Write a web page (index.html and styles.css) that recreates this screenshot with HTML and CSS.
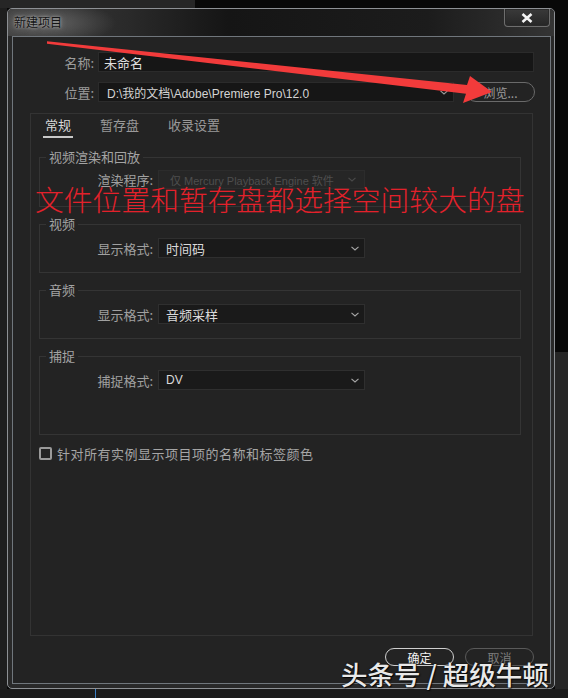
FILE: index.html
```html
<!DOCTYPE html>
<html lang="zh-CN">
<head>
<meta charset="utf-8">
<title>新建项目</title>
<link rel="stylesheet" href="styles.css">
</head>
<body>
<div class="screen">
  <div class="dialog">
    <div class="titlebar">
      <span class="title">新建项目</span>
      <div class="close">
        <svg width="12" height="10" viewBox="0 0 12 10"><path d="M1.5 1 L10.5 9 M10.5 1 L1.5 9" stroke="#f4f4f4" stroke-width="2.6" fill="none"/></svg>
      </div>
    </div>
    <div class="panel">
      <div class="field-row">
        <span class="field-label">名称:</span>
        <div class="text-input name-input">未命名</div>
      </div>
      <div class="field-row loc-row">
        <span class="field-label">位置:</span>
        <div class="text-input loc-input">
          <span>D:\我的文档\Adobe\Premiere Pro\12.0</span>
          <svg class="chev" width="8" height="5" viewBox="0 0 8 5"><path d="M0.5 0.8 L4 4 L7.5 0.8" stroke="#9a9a9a" stroke-width="1.1" fill="none"/></svg>
        </div>
        <div class="pill browse">浏览...</div>
      </div>

      <div class="tab-panel">
        <div class="tabs">
          <span class="tab active">常规</span>
          <span class="tab">暂存盘</span>
          <span class="tab">收录设置</span>
        </div>

        <fieldset class="group group-render">
          <legend>视频渲染和回放</legend>
          <div class="prop-row">
            <span class="prop-label">渲染程序:</span>
            <div class="select disabled">
              <span>仅 Mercury Playback Engine 软件</span>
              <svg class="chev" width="8" height="5" viewBox="0 0 8 5"><path d="M0.5 0.8 L4 4 L7.5 0.8" stroke="#4a4a4a" stroke-width="1.1" fill="none"/></svg>
            </div>
          </div>
        </fieldset>

        <fieldset class="group">
          <legend>视频</legend>
          <div class="prop-row">
            <span class="prop-label">显示格式:</span>
            <div class="select">
              <span>时间码</span>
              <svg class="chev" width="8" height="5" viewBox="0 0 8 5"><path d="M0.5 0.8 L4 4 L7.5 0.8" stroke="#a8a8a8" stroke-width="1.1" fill="none"/></svg>
            </div>
          </div>
        </fieldset>

        <fieldset class="group">
          <legend>音频</legend>
          <div class="prop-row">
            <span class="prop-label">显示格式:</span>
            <div class="select">
              <span>音频采样</span>
              <svg class="chev" width="8" height="5" viewBox="0 0 8 5"><path d="M0.5 0.8 L4 4 L7.5 0.8" stroke="#a8a8a8" stroke-width="1.1" fill="none"/></svg>
            </div>
          </div>
        </fieldset>

        <fieldset class="group group-capture">
          <legend>捕捉</legend>
          <div class="prop-row">
            <span class="prop-label">捕捉格式:</span>
            <div class="select">
              <span class="latin">DV</span>
              <svg class="chev" width="8" height="5" viewBox="0 0 8 5"><path d="M0.5 0.8 L4 4 L7.5 0.8" stroke="#a8a8a8" stroke-width="1.1" fill="none"/></svg>
            </div>
          </div>
        </fieldset>

        <label class="check-row">
          <span class="checkbox"></span>
          <span class="check-text">针对所有实例显示项目项的名称和标签颜色</span>
        </label>
      </div>

      <div class="button-row">
        <div class="pill ok">确定</div>
        <div class="pill cancel">取消</div>
      </div>
    </div>
  </div>

  <svg class="arrow" width="568" height="698" viewBox="0 0 568 698">
    <polygon points="47,41.3 467,85 470,76 492,92 463,103 466,93.8 47,43.8" fill="#f23b3b"/>
  </svg>
  <div class="note">文件位置和暂存盘都选择空间较大的盘</div>
  <div class="watermark">头条号 / 超级牛顿</div>
</div>
</body>
</html>
```

FILE: styles.css
```css
* { box-sizing: border-box; }

body {
  margin: 0;
  background: #0d0d0d;
  font-family: "Liberation Sans", "Noto Sans CJK SC", sans-serif;
  font-size: 12px;
}

.screen {
  position: relative;
  width: 568px;
  height: 698px;
  overflow: hidden;
  padding: 8px 0 0 7px;
  background:
    linear-gradient(#3b7fc4, #3b7fc4) 95px 689px / 1px 9px no-repeat,
    linear-gradient(#1c1c1c, #1c1c1c) 0 689px / 568px 9px no-repeat,
    linear-gradient(#262626, #262626) 0 0 / 195px 8px no-repeat,
    linear-gradient(#1e1e1e, #1e1e1e) 0 0 / 7px 698px no-repeat,
    linear-gradient(#262626, #262626) 555px 352px / 13px 346px no-repeat,
    #080808;
}

.dialog {
  width: 548px;
  height: 681px;
  border: 1px solid #8d9094;
  border-radius: 5px;
  background: #292929;
  padding-bottom: 4px;
  display: flex;
  flex-direction: column;
}

.titlebar {
  height: 27px;
  flex: none;
  display: flex;
  align-items: flex-start;
  justify-content: space-between;
  padding-left: 6px;
  background:
    radial-gradient(ellipse 70px 22px at 38px 14px, rgba(120,120,120,0.7), rgba(120,120,120,0) 100%),
    linear-gradient(90deg, #3a3a3a 0, #2a2a2a 120px, #151515 220px, #1c1c1c 420px, #343434 100%);
  border-radius: 4px 4px 0 0;
}

.title {
  margin-top: 5px;
  font-family: "Noto Sans CJK SC", sans-serif;
  font-size: 12px;
  line-height: 16px;
  color: #141414;
  text-shadow: 0 0 3px rgba(210,210,210,0.8), 0 0 6px rgba(180,180,180,0.6);
}

.close {
  width: 46px;
  height: 18px;
  margin-right: 4px;
  border: 1px solid #6e6e6e;
  border-top: none;
  border-radius: 0 0 4px 4px;
  background: linear-gradient(#3a3a3a, #262626);
  box-shadow: inset 0 0 0 1px #2a2a2a;
  display: flex;
  align-items: center;
  justify-content: center;
}

.panel {
  flex: 1;
  margin: 0 3px 0 4px;
  border: 1px solid #70767c;
  background: #232323;
  padding-top: 15px;
  display: flex;
  flex-direction: column;
}

.field-row {
  display: flex;
  align-items: center;
  gap: 4px;
  height: 20px;
}

.loc-row { margin-top: 10px; }

.field-label {
  width: 81px;
  text-align: right;
  font-family: "Noto Sans CJK SC", sans-serif;
  font-size: 13px;
  color: #9c9c9c;
}

.text-input {
  height: 20px;
  background: #161616;
  border: 1px solid #2b2b2b;
  color: #dedede;
  display: flex;
  align-items: center;
  font-family: "Liberation Sans", "Noto Sans CJK SC", sans-serif;
  font-size: 12px;
}

.name-input {
  width: 436px;
  padding-left: 5px;
  font-family: "Noto Sans CJK SC", sans-serif;
  font-size: 13px;
}

.loc-input {
  width: 356px;
  padding: 0 5px 0 8px;
  justify-content: space-between;
  color: #d4d4d4;
}

.pill {
  width: 69px;
  height: 20px;
  border-radius: 10px;
  display: flex;
  align-items: center;
  justify-content: center;
  font-family: "Noto Sans CJK SC", sans-serif;
  font-size: 12px;
}

.browse {
  margin-left: 8px;
  border: 1px solid #6a6a6a;
  color: #9c9c9c;
}

.tab-panel {
  margin: 11px 0 0 17px;
  width: 503px;
  height: 523px;
  border: 1px solid #333;
  display: flex;
  flex-direction: column;
}

.tabs {
  display: flex;
  gap: 25px;
  padding: 2px 0 0 12px;
}

.tab {
  font-family: "Noto Sans CJK SC", sans-serif;
  font-size: 13px;
  line-height: 18px;
  padding: 0 2px 2px;
  color: #9a9a9a;
  border-bottom: 2px solid transparent;
}

.tab.active {
  color: #d8d8d8;
  border-bottom-color: #c8c8c8;
}

.group {
  margin: 9px 11px 0 8px;
  padding: 6px 0 14px 0;
  border: 1px solid #343434;
  min-width: 0;
}

.group-render {
  margin-top: 11px;
  padding-top: 5px;
  padding-bottom: 17px;
}

.group-capture { padding-bottom: 44px; }

.group legend {
  margin-left: 6px;
  padding: 0 3px;
  font-family: "Noto Sans CJK SC", sans-serif;
  font-size: 13px;
  line-height: 16px;
  color: #a4a4a4;
}

.prop-row {
  display: flex;
  align-items: center;
  gap: 5px;
}

.prop-label {
  width: 113px;
  text-align: right;
  font-family: "Noto Sans CJK SC", sans-serif;
  font-size: 13px;
  color: #a0a0a0;
}

.select {
  width: 207px;
  height: 20px;
  background: #1a1a1a;
  border: 1px solid #2f2f2f;
  padding: 0 5px 0 7px;
  display: flex;
  align-items: center;
  justify-content: space-between;
  font-family: "Noto Sans CJK SC", sans-serif;
  font-size: 13px;
  color: #dadada;
}

.select .latin {
  font-family: "Liberation Sans", sans-serif;
  font-size: 12px;
}

.select.disabled {
  height: 19px;
  background: #262626;
  border-color: #2c2c2c;
  color: #4e4e4e;
  font-family: "Liberation Sans", "Noto Sans CJK SC", sans-serif;
  font-size: 11px;
  padding-left: 11px;
  padding-right: 8px;
}

.chev { flex: none; }

.check-row {
  display: flex;
  align-items: center;
  margin: 9px 0 0 8px;
}

.checkbox {
  width: 13px;
  height: 13px;
  border: 2px solid #9a9a9a;
  border-radius: 2px;
}

.check-text {
  margin-left: 5px;
  font-family: "Noto Sans CJK SC", sans-serif;
  font-size: 13px;
  letter-spacing: 0.5px;
  color: #a6a6a6;
}

.button-row {
  display: flex;
  justify-content: flex-end;
  gap: 11px;
  margin-top: 12px;
  padding-right: 16px;
}

.button-row .pill { height: 18px; border-radius: 9px; }

.ok {
  border: 1px solid #cfcfcf;
  color: #f2f2f2;
}

.cancel {
  border: 1px solid #5a5a5a;
  color: #7c7c7c;
}

.arrow {
  position: absolute;
  left: 0;
  top: 0;
  pointer-events: none;
}

.note {
  position: absolute;
  left: 35px;
  top: 181px;
  font-family: "Noto Sans CJK SC", sans-serif;
  font-weight: 300;
  font-size: 28.8px;
  line-height: 36px;
  color: #e3212b;
  white-space: nowrap;
  pointer-events: none;
}

.watermark {
  position: absolute;
  left: 341px;
  top: 656px;
  font-family: "Noto Sans CJK SC", sans-serif;
  font-weight: 500;
  font-size: 26.5px;
  line-height: 36px;
  color: #e9e9e9;
  text-shadow: 0 0 2px rgba(0,0,0,0.9), 1px 1px 1px rgba(0,0,0,0.8);
  white-space: nowrap;
  pointer-events: none;
}
```
